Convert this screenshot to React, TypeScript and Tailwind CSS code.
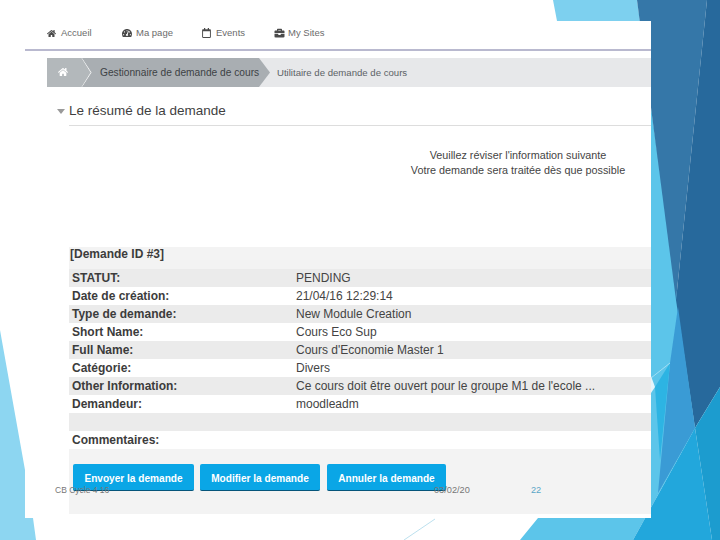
import { FaHome, FaTachometerAlt, FaRegCalendar, FaBriefcase } from 'react-icons/fa';

const rows = [
  ['STATUT:', 'PENDING'],
  ['Date de création:', '21/04/16 12:29:14'],
  ['Type de demande:', 'New Module Creation'],
  ['Short Name:', 'Cours Eco Sup'],
  ['Full Name:', "Cours d'Economie Master 1"],
  ['Catégorie:', 'Divers'],
  ['Other Information:', "Ce cours doit être ouvert pour le groupe M1 de l'ecole ..."],
  ['Demandeur:', 'moodleadm'],
];

const navItems = [
  { icon: <FaHome className="w-[9px] h-[9px]" />, label: 'Accueil', width: 'w-[75px]', gap: 'gap-[5px]' },
  { icon: <FaTachometerAlt className="w-[10px] h-[10px]" />, label: 'Ma page', width: 'w-[80px]', gap: 'gap-[4px]' },
  { icon: <FaRegCalendar className="w-[9px] h-[10px]" />, label: 'Events', width: 'w-[72px]', gap: 'gap-[5px]' },
  { icon: <FaBriefcase className="w-[11px] h-[10px]" />, label: 'My Sites', width: 'w-[60px]', gap: 'gap-[3px]' },
];

function Background() {
  return (
    <svg className="absolute inset-0" width="720" height="540" viewBox="0 0 720 540">
      <polygon points="553,0 637,0 652,107 652,40 557,21" fill="#7dd0ef" />
      <polygon points="651,107 674,270 678,307 695,428 633,540 520,540 538,518 651,518" fill="#5cc5ea" />
      <polygon points="637,0 707,0 676,300" fill="#3577a8" />
      <polygon points="707,0 720,0 720,387 695,428 676,300" fill="#27699c" />
      <polygon points="678,307 695,428 658,493 670,363" fill="#3a9bd5" />
      <polygon points="670,363 655,387 660,460" fill="#2db4e3" />
      <polygon points="695,428 712,540 633,540" fill="#22a7dc" />
      <polygon points="695,428 720,387 720,540 712,540" fill="#1c9ccf" />
      <polygon points="0,330 25,470 25,518 33,518 36,540 0,540" fill="#8dd6f1" />
      <polygon points="651,376 655,387 651,393" fill="#e4f5fb" />
      <line x1="435" y1="519" x2="404" y2="540" stroke="#9fd3e6" strokeWidth="0.7" />
      <line x1="651" y1="378" x2="670" y2="363" stroke="#bfe8f6" strokeWidth="0.7" />
    </svg>
  );
}

export default function App() {
  return (
    <div className="relative w-[720px] h-[540px] overflow-hidden bg-white font-['Liberation_Sans',Arial,sans-serif]">
      <Background />

      <div className="relative ml-[25px] top-[21px] w-[626px] h-[497px] bg-white flex flex-col">
        <div className="h-[30px] pb-[4px] border-b-2 border-[#b9b9cf] flex items-center pl-[22px] text-[9.5px] text-[#6b6b6b]">
          {navItems.map((item) => (
            <div key={item.label} className={`flex items-center ${item.width} ${item.gap}`}>
              <span className="text-[#4a4a4a]">{item.icon}</span>
              {item.label}
            </div>
          ))}
        </div>

        <div className="mt-[7px] ml-[22px] h-[29px] bg-[#e7e8ea] flex leading-[29px]">
          <div className="relative z-10 w-[45px] bg-[#b3b8bb] [clip-path:polygon(0_0,35px_0,45px_50%,35px_100%,0_100%)] text-white">
            <FaHome className="absolute left-[11px] top-[9px] w-[10px] h-[10px]" />
            <svg className="absolute left-0 top-0" width="45" height="29">
              <polyline points="35,0 44,14.5 35,29" fill="none" stroke="#ffffff" strokeWidth="0.8" />
            </svg>
          </div>
          <div className="-ml-[10px] w-[188px] pl-[18px] whitespace-nowrap text-[10.2px] bg-[#a9aeb2] text-[#3d4245] [clip-path:polygon(0_0,177px_0,188px_50%,177px_100%,0_100%)]">
            Gestionnaire de demande de cours
          </div>
          <div className="pl-[7px] text-[9.6px] text-[#5c6266]">Utilitaire de demande de cours</div>
        </div>

        <div className="mt-[16px] ml-[32px] flex items-center gap-[4px] text-[13.5px] leading-[16px] text-[#3f3f3f]">
          <span className="w-0 h-0 border-x-[4.5px] border-x-transparent border-t-[5px] border-t-[#9a9a9a]" />
          Le résumé de la demande
        </div>
        <div className="mt-[6px] ml-[44px] h-px bg-[#dddddd]" />

        <div className="mt-[22px] ml-[44px] w-[562px] pl-[336px] flex flex-col items-center text-[10.8px] leading-[15px] text-[#444444]">
          <p className="whitespace-nowrap">Veuillez réviser l'information suivante</p>
          <p className="whitespace-nowrap">Votre demande sera traitée dès que possible</p>
        </div>

        <div className="mt-[69px] ml-[44px] flex flex-col text-[12px] text-[#444444]">
          <div className="h-[22px] bg-[#f3f3f3] pl-[1px] leading-[14px] font-bold text-[#3c3c3c]">[Demande ID #3]</div>
          {rows.map(([label, value], i) => (
            <div key={label} className={`h-[18px] flex leading-[18px] pl-[3px] ${i % 2 === 0 ? 'bg-[#ebebeb]' : 'bg-white'}`}>
              <div className="w-[224px] font-bold text-[#3c3c3c]">{label}</div>
              <div>{value}</div>
            </div>
          ))}
          <div className="h-[18px] bg-[#ebebeb]" />
          <div className="h-[18px] leading-[18px] pl-[3px] bg-white font-bold text-[#3c3c3c]">Commentaires:</div>
          <div className="h-[65px] bg-[#f3f3f3] pt-[15px] pl-[4px] flex gap-[6px] items-start text-[10.1px] text-white">
            <button className="w-[121px] h-[27px] pt-[3px] rounded-[2px] bg-[#0aa6e6] border-b border-[#06557a] font-bold">Envoyer la demande</button>
            <button className="w-[120px] h-[27px] pt-[3px] rounded-[2px] bg-[#0aa6e6] border-b border-[#06557a] font-bold">Modifier la demande</button>
            <button className="w-[119px] h-[27px] pt-[3px] rounded-[2px] ml-px bg-[#0aa6e6] border-b border-[#06557a] font-bold">Annuler la demande</button>
          </div>
        </div>

        <span className="absolute left-[30px] top-[464px] text-[8.5px] leading-[10px] text-[#777777]">CB Cycle 4 16</span>
        <span className="absolute left-[409px] top-[464px] text-[9.2px] leading-[10px] text-[#777777]">03/02/20</span>
        <span className="absolute left-[506px] top-[464px] text-[9.2px] leading-[10px] text-[#5aa7c7]">22</span>
      </div>
    </div>
  );
}
